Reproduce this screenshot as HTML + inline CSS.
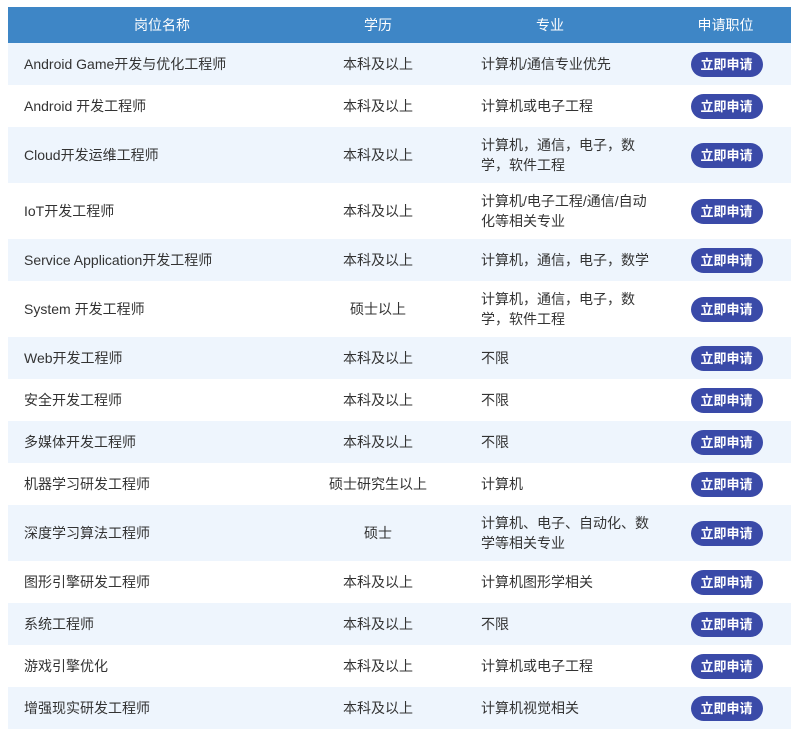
<!DOCTYPE html>
<html><head><meta charset="utf-8"><style>
body{margin:0;background:#fff;font-family:"Liberation Sans","Noto Sans CJK SC",sans-serif;color:#333;}
table{position:absolute;left:8px;top:7px;width:783px;border-collapse:collapse;table-layout:fixed;font-size:14px;}
th{background:#3e86c6;color:#fff;font-weight:normal;height:36px;padding:0;font-size:14px;}
td{padding:0;line-height:20px;}
tr.o td{background:#eef5fd;}
tr.s td{height:42px;}
tr.d td{height:56px;}
td.n{padding-left:16px;}
td.e{text-align:center;}
td.m{padding-left:41px;}
td.b{text-align:center;}
.btn{display:inline-block;width:72px;height:25px;line-height:25px;border-radius:13px;background:#3a4aa8;color:#fff;font-weight:bold;font-size:13px;margin-left:2px;}
</style></head><body>
<table>
<colgroup><col style="width:308px"><col style="width:124px"><col style="width:220px"><col style="width:131px"></colgroup>
<tr><th>岗位名称</th><th>学历</th><th>专业</th><th>申请职位</th></tr>
<tr class="o s"><td class="n">Android Game开发与优化工程师</td><td class="e">本科及以上</td><td class="m">计算机/通信专业优先</td><td class="b"><span class="btn">立即申请</span></td></tr>
<tr class="s"><td class="n">Android 开发工程师</td><td class="e">本科及以上</td><td class="m">计算机或电子工程</td><td class="b"><span class="btn">立即申请</span></td></tr>
<tr class="o d"><td class="n">Cloud开发运维工程师</td><td class="e">本科及以上</td><td class="m">计算机，通信，电子，数<br>学，软件工程</td><td class="b"><span class="btn">立即申请</span></td></tr>
<tr class="d"><td class="n">IoT开发工程师</td><td class="e">本科及以上</td><td class="m">计算机/电子工程/通信/自动<br>化等相关专业</td><td class="b"><span class="btn">立即申请</span></td></tr>
<tr class="o s"><td class="n">Service Application开发工程师</td><td class="e">本科及以上</td><td class="m">计算机，通信，电子，数学</td><td class="b"><span class="btn">立即申请</span></td></tr>
<tr class="d"><td class="n">System 开发工程师</td><td class="e">硕士以上</td><td class="m">计算机，通信，电子，数<br>学，软件工程</td><td class="b"><span class="btn">立即申请</span></td></tr>
<tr class="o s"><td class="n">Web开发工程师</td><td class="e">本科及以上</td><td class="m">不限</td><td class="b"><span class="btn">立即申请</span></td></tr>
<tr class="s"><td class="n">安全开发工程师</td><td class="e">本科及以上</td><td class="m">不限</td><td class="b"><span class="btn">立即申请</span></td></tr>
<tr class="o s"><td class="n">多媒体开发工程师</td><td class="e">本科及以上</td><td class="m">不限</td><td class="b"><span class="btn">立即申请</span></td></tr>
<tr class="s"><td class="n">机器学习研发工程师</td><td class="e">硕士研究生以上</td><td class="m">计算机</td><td class="b"><span class="btn">立即申请</span></td></tr>
<tr class="o d"><td class="n">深度学习算法工程师</td><td class="e">硕士</td><td class="m">计算机、电子、自动化、数<br>学等相关专业</td><td class="b"><span class="btn">立即申请</span></td></tr>
<tr class="s"><td class="n">图形引擎研发工程师</td><td class="e">本科及以上</td><td class="m">计算机图形学相关</td><td class="b"><span class="btn">立即申请</span></td></tr>
<tr class="o s"><td class="n">系统工程师</td><td class="e">本科及以上</td><td class="m">不限</td><td class="b"><span class="btn">立即申请</span></td></tr>
<tr class="s"><td class="n">游戏引擎优化</td><td class="e">本科及以上</td><td class="m">计算机或电子工程</td><td class="b"><span class="btn">立即申请</span></td></tr>
<tr class="o s"><td class="n">增强现实研发工程师</td><td class="e">本科及以上</td><td class="m">计算机视觉相关</td><td class="b"><span class="btn">立即申请</span></td></tr>
</table>
</body></html>
